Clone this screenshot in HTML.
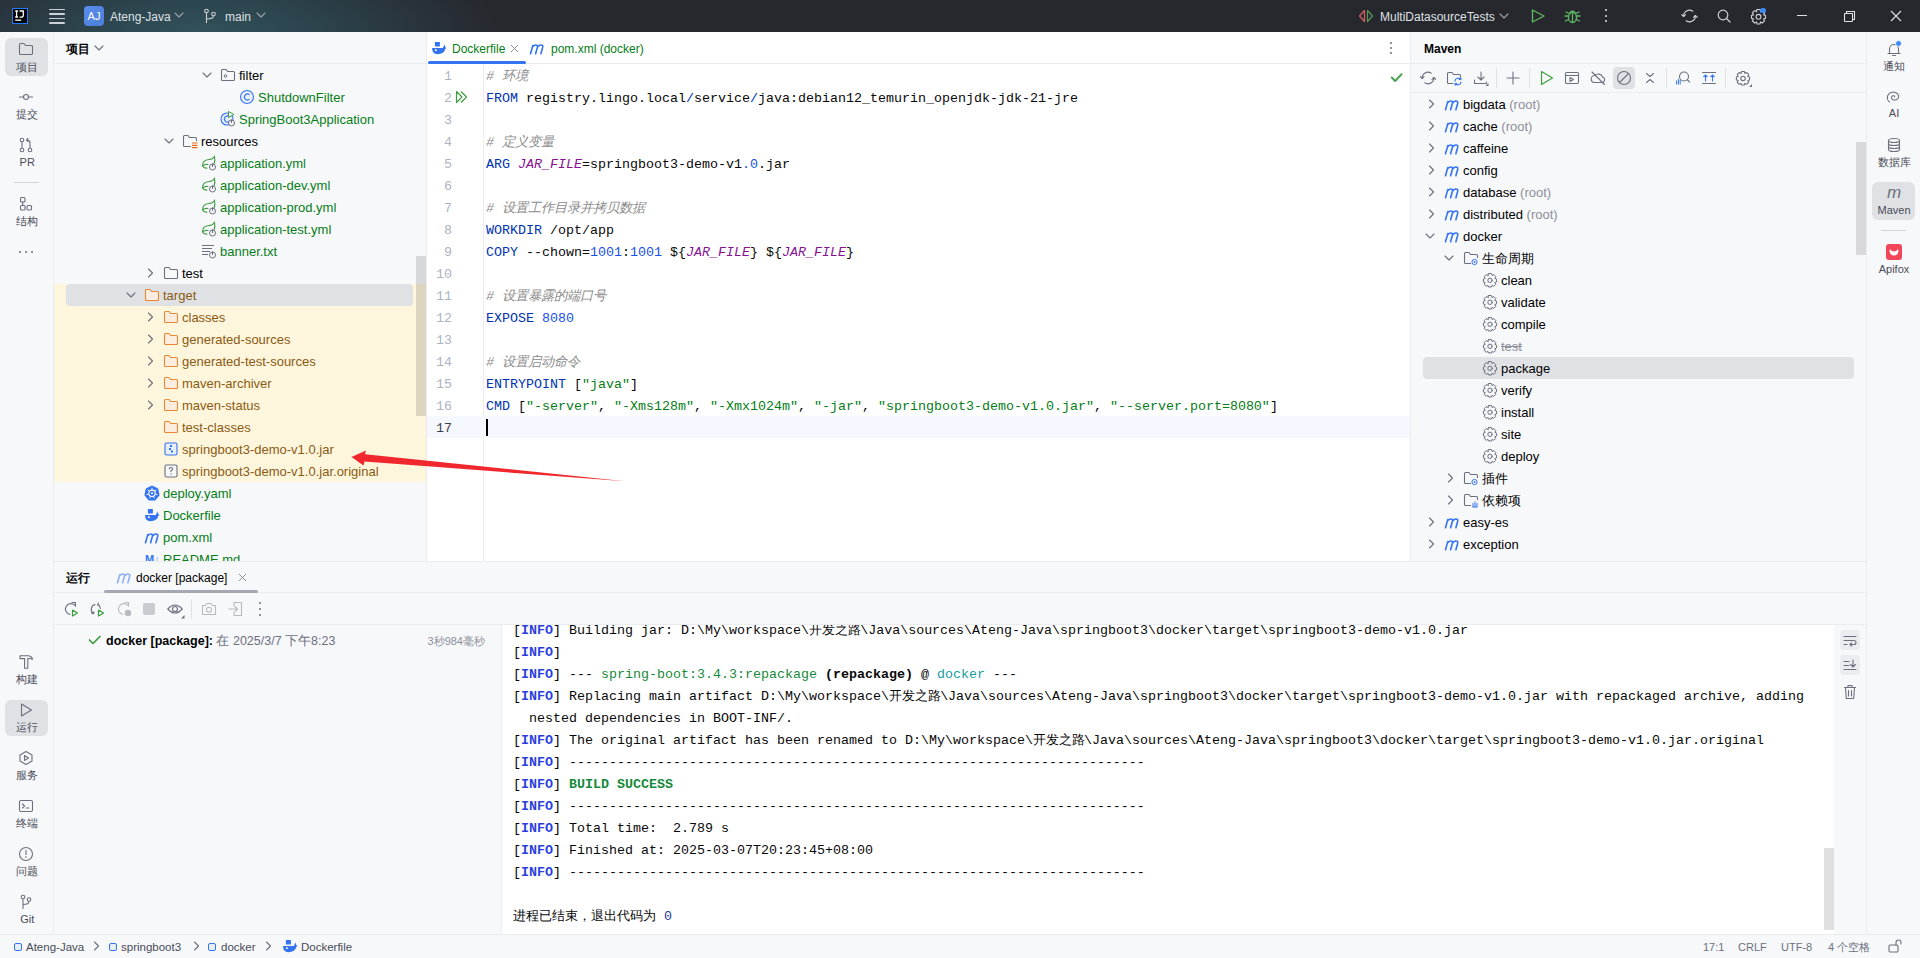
<!DOCTYPE html><html><head><meta charset="utf-8"><style>
*{margin:0;padding:0;box-sizing:border-box}
html,body{width:1920px;height:958px;overflow:hidden;background:#F7F8FA;font-family:"Liberation Sans", sans-serif;font-size:13px;color:#000}
.a{position:absolute}
.t{position:absolute;white-space:pre;line-height:16px}
.m{font-family:"Liberation Mono", monospace;font-size:13.33px}
svg{position:absolute;overflow:visible}
.s{fill:none;stroke:#6C707E;stroke-width:1.1;stroke-linecap:round;stroke-linejoin:round}
</style></head><body>
<div class="a" style="left:0px;top:0px;width:1920px;height:32px;background:radial-gradient(ellipse 300px 90px at 200px 32px,#31525c 0%,#2c434c 40%,#29343d 72%,#27282e 100%)"></div>
<div class="a" style="left:0px;top:32px;width:53px;height:903px;background:#F7F8FA"></div>
<div class="a" style="left:53px;top:32px;width:1px;height:903px;background:#EBECF0"></div>
<div class="a" style="left:54px;top:32px;width:372px;height:530px;background:#F7F8FA"></div>
<div class="a" style="left:54px;top:63px;width:372px;height:1px;background:#EBECF0"></div>
<div class="a" style="left:426px;top:32px;width:1px;height:530px;background:#EBECF0"></div>
<div class="a" style="left:427px;top:32px;width:983px;height:530px;background:#FFFFFF"></div>
<div class="a" style="left:427px;top:63px;width:983px;height:1px;background:#EBECF0"></div>
<div class="a" style="left:1410px;top:32px;width:1px;height:530px;background:#EBECF0"></div>
<div class="a" style="left:1411px;top:32px;width:455px;height:530px;background:#F7F8FA"></div>
<div class="a" style="left:1411px;top:63px;width:455px;height:1px;background:#EBECF0"></div>
<div class="a" style="left:1411px;top:92px;width:455px;height:1px;background:#EBECF0"></div>
<div class="a" style="left:1866px;top:32px;width:1px;height:903px;background:#EBECF0"></div>
<div class="a" style="left:1867px;top:32px;width:53px;height:903px;background:#F7F8FA"></div>
<div class="a" style="left:54px;top:561px;width:1812px;height:1px;background:#EBECF0"></div>
<div class="a" style="left:54px;top:562px;width:1812px;height:373px;background:#F7F8FA"></div>
<div class="a" style="left:54px;top:592px;width:1812px;height:1px;background:#EBECF0"></div>
<div class="a" style="left:54px;top:624px;width:1812px;height:1px;background:#EBECF0"></div>
<div class="a" style="left:501px;top:625px;width:1px;height:310px;background:#EBECF0"></div>
<div class="a" style="left:502px;top:625px;width:1332px;height:310px;background:#FFFFFF"></div>
<div class="a" style="left:0px;top:934px;width:1920px;height:1px;background:#EBECF0"></div>
<div class="a" style="left:0px;top:935px;width:1920px;height:23px;background:#F7F8FA"></div>
<div class="a" style="left:12px;top:8px;width:16px;height:16px;background:#000;border:1.2px solid #1A7DF5"></div>
<svg style="left:12px;top:8px;" width="16" height="16" viewBox="0 0 16 16"><path d="M3.2 3 H6 M4.6 3 V9 M3.2 9 H6" stroke="#fff" stroke-width="1.3" fill="none"/><path d="M7.5 3 H11.3 V7.3 Q11.3 9.2 9.3 9.2 H7.5" stroke="#fff" stroke-width="1.3" fill="none"/><rect x="3.2" y="11.5" width="6" height="1.3" fill="#fff"/></svg>
<div class="a" style="left:49px;top:8.5px;width:16px;height:1.5px;background:#CED0D6;border-radius:1px"></div>
<div class="a" style="left:49px;top:13px;width:16px;height:1.5px;background:#CED0D6;border-radius:1px"></div>
<div class="a" style="left:49px;top:17.6px;width:16px;height:1.5px;background:#CED0D6;border-radius:1px"></div>
<div class="a" style="left:49px;top:22.2px;width:16px;height:1.5px;background:#CED0D6;border-radius:1px"></div>
<div class="a" style="left:84px;top:6px;width:20px;height:20px;background:linear-gradient(135deg,#5B8DEF,#4A7FD6);border-radius:4px"></div>
<div class="t" style="left:84px;top:8px;width:20px;text-align:center;font-size:11px;color:#fff">AJ</div>
<div class="t" style="left:110px;top:9px;color:#DFE1E5;font-size:12px">Ateng-Java</div>
<svg style="left:174px;top:11px;" width="10" height="8" viewBox="0 0 10 8"><path d="M1 2 L5 6 L9 2" fill="none" stroke="#9DA0A8" stroke-width="1.1" stroke-linecap="round" stroke-linejoin="round"/></svg>
<svg style="left:203px;top:8px;" width="14" height="16" viewBox="0 0 14 16"><g fill="none" stroke="#CED0D6" stroke-width="1.1"><circle cx="3.5" cy="3" r="1.8"/><circle cx="10.5" cy="6" r="1.8"/><path d="M3.5 5 V15 M10.5 8 Q10.5 11 3.5 11"/></g></svg>
<div class="t" style="left:225px;top:9px;color:#DFE1E5;font-size:12px">main</div>
<svg style="left:256px;top:11px;" width="10" height="8" viewBox="0 0 10 8"><path d="M1 2 L5 6 L9 2" fill="none" stroke="#9DA0A8" stroke-width="1.1" stroke-linecap="round" stroke-linejoin="round"/></svg>
<svg style="left:1358px;top:9px;" width="16" height="14" viewBox="0 0 16 14"><path d="M6.5 1.5 L1.5 7 L6.5 12.5 Z" fill="none" stroke="#DB5C5C" stroke-width="1.2" stroke-linejoin="round"/><path d="M9.5 1.5 L14.5 7 L9.5 12.5 Z" fill="none" stroke="#57965C" stroke-width="1.2" stroke-linejoin="round"/></svg>
<div class="t" style="left:1380px;top:9px;color:#DFE1E5;font-size:12px">MultiDatasourceTests</div>
<svg style="left:1499px;top:12px;" width="10" height="8" viewBox="0 0 10 8"><path d="M1 2 L5 6 L9 2" fill="none" stroke="#9DA0A8" stroke-width="1.1" stroke-linecap="round" stroke-linejoin="round"/></svg>
<svg style="left:1531px;top:9px;" width="15" height="14" viewBox="0 0 15 14"><path d="M1.5 1 L13 7 L1.5 13 Z" fill="none" stroke="#5FB865" stroke-width="1.4" stroke-linejoin="round"/></svg>
<svg style="left:1564px;top:8px;" width="17" height="16" viewBox="0 0 17 16"><g fill="none" stroke="#5FB865" stroke-width="1.3" stroke-linecap="round"><ellipse cx="8.5" cy="9.5" rx="4" ry="5"/><path d="M6 4.5 Q8.5 2 11 4.5 M4.5 8 H1 M12.5 8 H16 M4.5 11.5 L1.5 13 M12.5 11.5 L15.5 13 M5 5.5 L2 4 M12 5.5 L15 4 M8.5 6 V14"/></g></svg>
<div class="a" style="left:1604.5px;top:8.8px;width:2.5px;height:2.5px;background:#DFE1E5;border-radius:50%"></div>
<div class="a" style="left:1604.5px;top:14.8px;width:2.5px;height:2.5px;background:#DFE1E5;border-radius:50%"></div>
<div class="a" style="left:1604.5px;top:19.8px;width:2.5px;height:2.5px;background:#DFE1E5;border-radius:50%"></div>
<svg style="left:1681px;top:8px;" width="17" height="16" viewBox="0 0 17 16"><g fill="none" stroke="#CED0D6" stroke-width="1.1" stroke-linecap="round" stroke-linejoin="round"><path d="M2.6 8.5 A5.9 5.9 0 0 1 11.8 3.2 M14.4 7.5 A5.9 5.9 0 0 1 5.2 12.8"/><path d="M0.7 6.6 L2.6 8.5 L4.5 6.6 M12.5 9.4 L14.4 7.5 L16.3 9.4"/></g></svg>
<svg style="left:1717px;top:9px;" width="15" height="15" viewBox="0 0 15 15"><g fill="none" stroke="#CED0D6" stroke-width="1.2" stroke-linecap="round"><circle cx="6" cy="6" r="4.8"/><path d="M9.5 9.5 L13 13"/></g></svg>
<svg style="left:1750px;top:8px;" width="17" height="16" viewBox="0 0 17 16"><g fill="none" stroke="#CED0D6" stroke-width="1.1"><path d="M7 1.5 H10 L10.6 3.6 L12.6 2.6 L14.6 4.8 L13.5 6.7 L15.5 7.4 V10.4 L13.5 11 L14.5 13 L12.4 15 L10.5 14 L9.9 16 H7.1 L6.5 14 L4.5 15 L2.4 13 L3.5 11 L1.5 10.4 V7.4 L3.5 6.8 L2.4 4.8 L4.4 2.6 L6.4 3.6 Z"/><circle cx="8.5" cy="8.8" r="2.4"/></g></svg>
<div class="a" style="left:1760.3px;top:8px;width:5.4px;height:5.4px;background:#3C8AF5;border-radius:50%"></div>
<div class="a" style="left:1797px;top:15px;width:10px;height:1.2px;background:#E0E0E0"></div>
<svg style="left:1843px;top:10px;" width="13" height="13" viewBox="0 0 13 13"><g fill="none" stroke="#E0E0E0" stroke-width="1.1"><rect x="1.5" y="3.5" width="8" height="8" rx="0.5"/><path d="M3.5 3.5 V1.5 H11.5 V9.5 H9.5"/></g></svg>
<svg style="left:1890px;top:10px;" width="12" height="12" viewBox="0 0 12 12"><path d="M1 1 L11 11 M11 1 L1 11" stroke="#E0E0E0" stroke-width="1.1"/></svg>
<div class="a" style="left:5px;top:38px;width:43px;height:38px;background:#DFE1E5;border-radius:6px"></div>
<svg style="left:18px;top:41px;" width="16" height="16" viewBox="0 0 16 16"><path d="M1.5 3.5 Q1.5 2.5 2.5 2.5 L6 2.5 L7.5 4.5 L13.5 4.5 Q14.5 4.5 14.5 5.5 L14.5 12.5 Q14.5 13.5 13.5 13.5 L2.5 13.5 Q1.5 13.5 1.5 12.5 Z" class="s"/></svg>
<div class="t" style="left:-2.8000000000000007px;top:59px;width:60px;text-align:center;color:#494B57;font-size:11px">项目</div>
<svg style="left:18px;top:89px;" width="16" height="16" viewBox="0 0 16 16"><g class="s"><circle cx="8" cy="8" r="2.5"/><path d="M1.5 8 H5.5 M10.5 8 H14.5"/></g></svg>
<div class="t" style="left:-2.8000000000000007px;top:106px;width:60px;text-align:center;color:#494B57;font-size:11px">提交</div>
<svg style="left:18px;top:137px;" width="16" height="16" viewBox="0 0 16 16"><g class="s"><circle cx="4" cy="3" r="1.8"/><circle cx="4" cy="13" r="1.8"/><circle cx="12" cy="13" r="1.8"/><path d="M4 5 V11 M12 11 V6 Q12 3 9 3 M10 1.5 L8.5 3 L10 4.5"/></g></svg>
<div class="t" style="left:-2.8000000000000007px;top:154px;width:60px;text-align:center;color:#494B57;font-size:11px">PR</div>
<div class="a" style="left:14px;top:182px;width:25px;height:1px;background:#D3D5DB"></div>
<svg style="left:18px;top:196px;" width="16" height="16" viewBox="0 0 16 16"><g class="s"><rect x="2.5" y="1.5" width="4.5" height="4.5" rx="1"/><rect x="2.5" y="9.5" width="4.5" height="4.5" rx="1"/><rect x="9" y="9.5" width="4.5" height="4.5" rx="1"/><path d="M4.7 6 V9.5"/></g></svg>
<div class="t" style="left:-2.8000000000000007px;top:213px;width:60px;text-align:center;color:#494B57;font-size:11px">结构</div>
<div class="a" style="left:19px;top:251px;width:2px;height:2px;background:#6C707E;border-radius:50%"></div>
<div class="a" style="left:25px;top:251px;width:2px;height:2px;background:#6C707E;border-radius:50%"></div>
<div class="a" style="left:31px;top:251px;width:2px;height:2px;background:#6C707E;border-radius:50%"></div>
<svg style="left:18px;top:654px;" width="16" height="16" viewBox="0 0 16 16"><g class="s"><path d="M2 1.8 H10.5 Q13.8 2.2 14.5 5.2 Q12.8 4.4 10.5 4.6 H9.8 V14.2 H6.6 V4.6 H2 Z"/></g></svg>
<div class="t" style="left:-2.8000000000000007px;top:671px;width:60px;text-align:center;color:#494B57;font-size:11px">构建</div>
<div class="a" style="left:5px;top:700px;width:43px;height:36px;background:#DFE1E5;border-radius:6px"></div>
<svg style="left:18px;top:702px;" width="16" height="16" viewBox="0 0 16 16"><path d="M3.5 2 L13.5 8 L3.5 14 Z" class="s"/></svg>
<div class="t" style="left:-2.8000000000000007px;top:719px;width:60px;text-align:center;color:#494B57;font-size:11px">运行</div>
<svg style="left:18px;top:750px;" width="16" height="16" viewBox="0 0 16 16"><g class="s"><path d="M8 1.5 L14 5 V11 L8 14.5 L2 11 V5 Z"/><path d="M6.5 5.5 L10.5 8 L6.5 10.5 Z"/></g></svg>
<div class="t" style="left:-2.8000000000000007px;top:767px;width:60px;text-align:center;color:#494B57;font-size:11px">服务</div>
<svg style="left:18px;top:798px;" width="16" height="16" viewBox="0 0 16 16"><g class="s"><rect x="1.5" y="2.5" width="13" height="11" rx="1.5"/><path d="M4.5 6 L6.5 8 L4.5 10 M8 10 H11"/></g></svg>
<div class="t" style="left:-2.8000000000000007px;top:815px;width:60px;text-align:center;color:#494B57;font-size:11px">终端</div>
<svg style="left:18px;top:846px;" width="16" height="16" viewBox="0 0 16 16"><g class="s"><circle cx="8" cy="8" r="6.5"/><path d="M8 4.5 V8.5"/></g><circle cx="8" cy="11" r="0.8" fill="#6C707E"/></svg>
<div class="t" style="left:-2.8000000000000007px;top:863px;width:60px;text-align:center;color:#494B57;font-size:11px">问题</div>
<svg style="left:18px;top:894px;" width="16" height="16" viewBox="0 0 16 16"><g class="s"><circle cx="5" cy="3" r="1.8"/><circle cx="11" cy="5.5" r="1.8"/><path d="M5 5 V14.5 M11 7.5 Q11 10.5 5 10.5"/></g></svg>
<div class="t" style="left:-2.8000000000000007px;top:911px;width:60px;text-align:center;color:#494B57;font-size:11px">Git</div>
<div class="a" style="left:1872px;top:182px;width:43px;height:38px;background:#DFE1E5;border-radius:6px"></div>
<svg style="left:1886px;top:42px;" width="16" height="16" viewBox="0 0 16 16"><g class="s"><path d="M3.5 11.5 V7 A4.5 4.5 0 0 1 12.5 7 V11.5 Z M2 11.5 H14 M6.5 13.5 H9.5"/></g></svg>
<div class="a" style="left:1895px;top:40px;width:7px;height:7px;background:#3C8AF5;border-radius:50%;border:1px solid #F7F8FA"></div>
<div class="t" style="left:1864.0px;top:58px;width:60px;text-align:center;color:#494B57;font-size:11px">通知</div>
<svg style="left:1886px;top:89px;" width="16" height="16" viewBox="0 0 16 16"><path d="M8.51 7.86 L8.53 7.83 L8.55 7.80 L8.57 7.76 L8.58 7.72 L8.59 7.68 L8.60 7.64 L8.61 7.60 L8.61 7.55 L8.61 7.51 L8.60 7.46 L8.59 7.41 L8.58 7.37 L8.56 7.32 L8.53 7.27 L8.51 7.22 L8.48 7.18 L8.44 7.13 L8.40 7.08 L8.36 7.04 L8.31 7.00 L8.26 6.96 L8.20 6.92 L8.14 6.88 L8.08 6.85 L8.01 6.82 L7.94 6.79 L7.87 6.76 L7.79 6.74 L7.71 6.73 L7.63 6.71 L7.54 6.70 L7.46 6.70 L7.37 6.69 L7.28 6.70 L7.19 6.71 L7.09 6.72 L7.00 6.73 L6.91 6.76 L6.82 6.78 L6.72 6.82 L6.63 6.85 L6.54 6.89 L6.45 6.94 L6.36 6.99 L6.28 7.05 L6.20 7.11 L6.12 7.18 L6.04 7.25 L5.97 7.33 L5.90 7.41 L5.83 7.49 L5.78 7.58 L5.72 7.67 L5.67 7.77 L5.63 7.87 L5.59 7.97 L5.56 8.08 L5.53 8.19 L5.51 8.30 L5.50 8.41 L5.49 8.53 L5.50 8.65 L5.51 8.76 L5.52 8.88 L5.55 9.00 L5.58 9.12 L5.62 9.24 L5.67 9.36 L5.72 9.48 L5.79 9.59 L5.86 9.71 L5.94 9.82 L6.02 9.93 L6.12 10.04 L6.22 10.14 L6.33 10.24 L6.44 10.33 L6.57 10.42 L6.70 10.51 L6.83 10.59 L6.98 10.67 L7.12 10.73 L7.28 10.80 L7.44 10.85 L7.60 10.90 L7.77 10.95 L7.94 10.98 L8.12 11.01 L8.29 11.03 L8.48 11.04 L8.66 11.05 L8.84 11.04 L9.03 11.03 L9.22 11.01 L9.40 10.98 L9.59 10.94 L9.78 10.89 L9.96 10.83 L10.14 10.77 L10.32 10.70 L10.50 10.61 L10.67 10.52 L10.84 10.42 L11.00 10.32 L11.16 10.20 L11.31 10.08 L11.46 9.95 L11.59 9.81 L11.73 9.66 L11.85 9.51 L11.96 9.35 L12.07 9.18 L12.17 9.01 L12.25 8.84 L12.33 8.66 L12.39 8.47 L12.45 8.28 L12.49 8.09 L12.53 7.89 L12.55 7.69 L12.56 7.49 L12.55 7.28 L12.54 7.08 L12.51 6.87 L12.47 6.67 L12.42 6.47 L12.36 6.26 L12.28 6.06 L12.19 5.86 L12.09 5.67 L11.97 5.47 L11.85 5.29 L11.71 5.10 L11.56 4.92 L11.39 4.75 L11.22 4.58 L11.04 4.43 L10.84 4.27 L10.64 4.13 L10.42 3.99 L10.20 3.87 L9.97 3.75 L9.73 3.64 L9.48 3.54 L9.23 3.46 L8.96 3.38 L8.70 3.31 L8.43 3.26 L8.15 3.22 L7.87 3.19 L7.58 3.17 L7.30 3.17 L7.01 3.18 L6.72 3.20 L6.43 3.23 L6.15 3.28 L5.86 3.34 L5.58 3.41 L5.30 3.50 L5.02 3.60 L4.75 3.71 L4.48 3.83 L4.22 3.97 L3.97 4.12 L3.72 4.28 L3.48 4.45 L3.26 4.63 L3.04 4.82 L2.83 5.03 L2.63 5.24 L2.45 5.47 L2.28 5.70 L2.12 5.94 L1.98 6.19 L1.85 6.45 L1.73 6.71 L1.63 6.98 L1.55 7.26 L1.48 7.54 L1.42 7.82 L1.39 8.11 L1.37 8.40 L1.37 8.69 L1.38 8.98 L1.42 9.28 L1.47 9.57 L1.54 9.86 L1.62 10.15 L1.73 10.44 L1.85 10.72 L1.98 11.00 L2.14 11.28 L2.31 11.55 L2.50 11.81 L2.70 12.06 L2.92 12.31 L3.16 12.55 L3.41 12.77 L3.68 12.99" fill="none" stroke="#6C707E" stroke-width="1.1" stroke-linecap="round"/></svg>
<div class="t" style="left:1864.0px;top:105px;width:60px;text-align:center;color:#494B57;font-size:11px">AI</div>
<svg style="left:1886px;top:137px;" width="16" height="16" viewBox="0 0 16 16"><g class="s"><ellipse cx="8" cy="3.5" rx="5.5" ry="2"/><path d="M2.5 3.5 V12.5 A5.5 2 0 0 0 13.5 12.5 V3.5 M2.5 6.5 A5.5 2 0 0 0 13.5 6.5 M2.5 9.5 A5.5 2 0 0 0 13.5 9.5"/></g></svg>
<div class="t" style="left:1864.0px;top:154px;width:60px;text-align:center;color:#494B57;font-size:11px">数据库</div>
<div class="t" style="left:1884px;top:183px;width:20px;text-align:center;font-size:17px;line-height:20px;font-style:italic;color:#6C707E">m</div>
<div class="t" style="left:1864.0px;top:202px;width:60px;text-align:center;color:#494B57;font-size:11px">Maven</div>
<div class="a" style="left:1881px;top:230px;width:25px;height:1px;background:#D3D5DB"></div>
<div class="a" style="left:1886px;top:244px;width:16px;height:16px;background:#F2465B;border-radius:3px"></div>
<svg style="left:1886px;top:244px;" width="16" height="16" viewBox="0 0 16 16"><path d="M4 5 A4.5 4.5 0 1 0 12 5 Q10.5 7.5 8 7.5 Q5.5 7.5 4 5 Z" fill="#fff"/></svg>
<div class="t" style="left:1864.0px;top:261px;width:60px;text-align:center;color:#494B57;font-size:11px">Apifox</div>
<div class="t" style="left:66px;top:41px;font-weight:bold;font-size:12px;color:#000">项目</div>
<svg style="left:94px;top:44px;" width="10" height="8" viewBox="0 0 10 8"><path d="M1 2 L5 6 L9 2" fill="none" stroke="#6C707E" stroke-width="1.1" stroke-linecap="round" stroke-linejoin="round"/></svg>
<div class="a" style="left:54px;top:284px;width:372px;height:198px;background:#FEF5DD"></div>
<div class="a" style="left:66px;top:284px;width:347px;height:22px;background:#DFE1E5;border-radius:4px"></div>
<div class="a" style="left:416px;top:256px;width:10px;height:160px;background:rgba(0,0,0,0.13)"></div>
<svg style="left:202px;top:71px;" width="10" height="8" viewBox="0 0 10 8"><path d="M1 2 L5 6 L9 2" fill="none" stroke="#6C707E" stroke-width="1.1" stroke-linecap="round" stroke-linejoin="round"/></svg>
<svg style="left:220px;top:67px;" width="16" height="16" viewBox="0 0 16 16"><path d="M1.5 3.5 Q1.5 2.5 2.5 2.5 L6 2.5 L7.5 4.5 L13.5 4.5 Q14.5 4.5 14.5 5.5 L14.5 12.5 Q14.5 13.5 13.5 13.5 L2.5 13.5 Q1.5 13.5 1.5 12.5 Z" fill="none" stroke="#6C707E" stroke-width="1.1" stroke-linejoin="round"/><circle cx="5.5" cy="9" r="1.3" fill="none" stroke="#6C707E" stroke-width="1"/></svg>
<div class="t" style="left:239px;top:68px;color:#000">filter</div>
<svg style="left:239px;top:89px;" width="16" height="16" viewBox="0 0 16 16"><circle cx="8" cy="8" r="6.5" fill="#E7EFFD" stroke="#3574F0" stroke-width="1.1"/><path d="M10.5 5.8 A3 3 0 1 0 10.5 10.2" fill="none" stroke="#3574F0" stroke-width="1.1"/></svg>
<div class="t" style="left:258px;top:90px;color:#067D17">ShutdownFilter</div>
<svg style="left:220px;top:111px;" width="16" height="16" viewBox="0 0 16 16"><circle cx="7" cy="8" r="6" fill="#E7EFFD" stroke="#3574F0" stroke-width="1.1"/><path d="M9.5 5.8 A3 3 0 1 0 9.5 10.2" fill="none" stroke="#3574F0" stroke-width="1.1"/><path d="M8.5 0.5 L14 3.5 L8.5 6.5 Z" fill="#F7F8FA" stroke="#3D9C3E" stroke-width="1"/><circle cx="11.5" cy="12" r="3" fill="#F7F8FA" stroke="#6C707E" stroke-width="1"/><path d="M11.5 8.5 V12" stroke="#6C707E" stroke-width="1"/></svg>
<div class="t" style="left:239px;top:112px;color:#067D17">SpringBoot3Application</div>
<svg style="left:164px;top:137px;" width="10" height="8" viewBox="0 0 10 8"><path d="M1 2 L5 6 L9 2" fill="none" stroke="#6C707E" stroke-width="1.1" stroke-linecap="round" stroke-linejoin="round"/></svg>
<svg style="left:182px;top:133px;" width="16" height="16" viewBox="0 0 16 16"><path d="M9 13.5 H2.5 Q1.5 13.5 1.5 12.5 V3.5 Q1.5 2.5 2.5 2.5 H6 L7.5 4.5 H13.5 Q14.5 4.5 14.5 5.5 V8" fill="none" stroke="#6C707E" stroke-width="1.1" stroke-linejoin="round"/><path d="M10 10 H15.5 M10 12.3 H15.5 M10 14.6 H15.5" stroke="#E66D17" stroke-width="1.2"/></svg>
<div class="t" style="left:201px;top:134px;color:#000">resources</div>
<svg style="left:201px;top:155px;" width="16" height="16" viewBox="0 0 16 16"><path d="M1.5 11 Q1.5 5 8 4.5 Q12 4.3 13.5 1.5 Q14.5 6 13 9 M1.5 11 Q4 9 7 9.5 M1.5 11 Q3 13.5 6 13" fill="none" stroke="#3D9C3E" stroke-width="1.1" stroke-linecap="round"/><circle cx="11.5" cy="12" r="3" fill="#F7F8FA" stroke="#6C707E" stroke-width="1"/><path d="M11.5 8.5 V12" stroke="#6C707E" stroke-width="1"/></svg>
<div class="t" style="left:220px;top:156px;color:#067D17">application.yml</div>
<svg style="left:201px;top:177px;" width="16" height="16" viewBox="0 0 16 16"><path d="M1.5 11 Q1.5 5 8 4.5 Q12 4.3 13.5 1.5 Q14.5 6 13 9 M1.5 11 Q4 9 7 9.5 M1.5 11 Q3 13.5 6 13" fill="none" stroke="#3D9C3E" stroke-width="1.1" stroke-linecap="round"/><circle cx="11.5" cy="12" r="3" fill="#F7F8FA" stroke="#6C707E" stroke-width="1"/><path d="M11.5 8.5 V12" stroke="#6C707E" stroke-width="1"/></svg>
<div class="t" style="left:220px;top:178px;color:#067D17">application-dev.yml</div>
<svg style="left:201px;top:199px;" width="16" height="16" viewBox="0 0 16 16"><path d="M1.5 11 Q1.5 5 8 4.5 Q12 4.3 13.5 1.5 Q14.5 6 13 9 M1.5 11 Q4 9 7 9.5 M1.5 11 Q3 13.5 6 13" fill="none" stroke="#3D9C3E" stroke-width="1.1" stroke-linecap="round"/><circle cx="11.5" cy="12" r="3" fill="#F7F8FA" stroke="#6C707E" stroke-width="1"/><path d="M11.5 8.5 V12" stroke="#6C707E" stroke-width="1"/></svg>
<div class="t" style="left:220px;top:200px;color:#067D17">application-prod.yml</div>
<svg style="left:201px;top:221px;" width="16" height="16" viewBox="0 0 16 16"><path d="M1.5 11 Q1.5 5 8 4.5 Q12 4.3 13.5 1.5 Q14.5 6 13 9 M1.5 11 Q4 9 7 9.5 M1.5 11 Q3 13.5 6 13" fill="none" stroke="#3D9C3E" stroke-width="1.1" stroke-linecap="round"/><circle cx="11.5" cy="12" r="3" fill="#F7F8FA" stroke="#6C707E" stroke-width="1"/><path d="M11.5 8.5 V12" stroke="#6C707E" stroke-width="1"/></svg>
<div class="t" style="left:220px;top:222px;color:#067D17">application-test.yml</div>
<svg style="left:201px;top:243px;" width="16" height="16" viewBox="0 0 16 16"><path d="M1 2.5 H13 M1 5.5 H11 M1 8.5 H9 M1 11.5 H7" stroke="#6C707E" stroke-width="1"/><circle cx="11.5" cy="12" r="3" fill="#F7F8FA" stroke="#6C707E" stroke-width="1"/><path d="M11.5 8.5 V12" stroke="#6C707E" stroke-width="1"/></svg>
<div class="t" style="left:220px;top:244px;color:#067D17">banner.txt</div>
<svg style="left:146px;top:268px;" width="8" height="10" viewBox="0 0 8 10"><path d="M2.5 1 L6.5 5 L2.5 9" fill="none" stroke="#6C707E" stroke-width="1.1" stroke-linecap="round" stroke-linejoin="round"/></svg>
<svg style="left:163px;top:265px;" width="16" height="16" viewBox="0 0 16 16"><path d="M1.5 3.5 Q1.5 2.5 2.5 2.5 L6 2.5 L7.5 4.5 L13.5 4.5 Q14.5 4.5 14.5 5.5 L14.5 12.5 Q14.5 13.5 13.5 13.5 L2.5 13.5 Q1.5 13.5 1.5 12.5 Z" fill="none" stroke="#6C707E" stroke-width="1.1" stroke-linejoin="round"/></svg>
<div class="t" style="left:182px;top:266px;color:#000">test</div>
<svg style="left:126px;top:291px;" width="10" height="8" viewBox="0 0 10 8"><path d="M1 2 L5 6 L9 2" fill="none" stroke="#6C707E" stroke-width="1.1" stroke-linecap="round" stroke-linejoin="round"/></svg>
<svg style="left:144px;top:287px;" width="16" height="16" viewBox="0 0 16 16"><path d="M1.5 3.5 Q1.5 2.5 2.5 2.5 L6 2.5 L7.5 4.5 L13.5 4.5 Q14.5 4.5 14.5 5.5 L14.5 12.5 Q14.5 13.5 13.5 13.5 L2.5 13.5 Q1.5 13.5 1.5 12.5 Z" fill="#FDECE0" stroke="#E88A35" stroke-width="1.1" stroke-linejoin="round"/></svg>
<div class="t" style="left:163px;top:288px;color:#8A5B12">target</div>
<svg style="left:146px;top:312px;" width="8" height="10" viewBox="0 0 8 10"><path d="M2.5 1 L6.5 5 L2.5 9" fill="none" stroke="#6C707E" stroke-width="1.1" stroke-linecap="round" stroke-linejoin="round"/></svg>
<svg style="left:163px;top:309px;" width="16" height="16" viewBox="0 0 16 16"><path d="M1.5 3.5 Q1.5 2.5 2.5 2.5 L6 2.5 L7.5 4.5 L13.5 4.5 Q14.5 4.5 14.5 5.5 L14.5 12.5 Q14.5 13.5 13.5 13.5 L2.5 13.5 Q1.5 13.5 1.5 12.5 Z" fill="#FDECE0" stroke="#E88A35" stroke-width="1.1" stroke-linejoin="round"/></svg>
<div class="t" style="left:182px;top:310px;color:#8A5B12">classes</div>
<svg style="left:146px;top:334px;" width="8" height="10" viewBox="0 0 8 10"><path d="M2.5 1 L6.5 5 L2.5 9" fill="none" stroke="#6C707E" stroke-width="1.1" stroke-linecap="round" stroke-linejoin="round"/></svg>
<svg style="left:163px;top:331px;" width="16" height="16" viewBox="0 0 16 16"><path d="M1.5 3.5 Q1.5 2.5 2.5 2.5 L6 2.5 L7.5 4.5 L13.5 4.5 Q14.5 4.5 14.5 5.5 L14.5 12.5 Q14.5 13.5 13.5 13.5 L2.5 13.5 Q1.5 13.5 1.5 12.5 Z" fill="#FDECE0" stroke="#E88A35" stroke-width="1.1" stroke-linejoin="round"/></svg>
<div class="t" style="left:182px;top:332px;color:#8A5B12">generated-sources</div>
<svg style="left:146px;top:356px;" width="8" height="10" viewBox="0 0 8 10"><path d="M2.5 1 L6.5 5 L2.5 9" fill="none" stroke="#6C707E" stroke-width="1.1" stroke-linecap="round" stroke-linejoin="round"/></svg>
<svg style="left:163px;top:353px;" width="16" height="16" viewBox="0 0 16 16"><path d="M1.5 3.5 Q1.5 2.5 2.5 2.5 L6 2.5 L7.5 4.5 L13.5 4.5 Q14.5 4.5 14.5 5.5 L14.5 12.5 Q14.5 13.5 13.5 13.5 L2.5 13.5 Q1.5 13.5 1.5 12.5 Z" fill="#FDECE0" stroke="#E88A35" stroke-width="1.1" stroke-linejoin="round"/></svg>
<div class="t" style="left:182px;top:354px;color:#8A5B12">generated-test-sources</div>
<svg style="left:146px;top:378px;" width="8" height="10" viewBox="0 0 8 10"><path d="M2.5 1 L6.5 5 L2.5 9" fill="none" stroke="#6C707E" stroke-width="1.1" stroke-linecap="round" stroke-linejoin="round"/></svg>
<svg style="left:163px;top:375px;" width="16" height="16" viewBox="0 0 16 16"><path d="M1.5 3.5 Q1.5 2.5 2.5 2.5 L6 2.5 L7.5 4.5 L13.5 4.5 Q14.5 4.5 14.5 5.5 L14.5 12.5 Q14.5 13.5 13.5 13.5 L2.5 13.5 Q1.5 13.5 1.5 12.5 Z" fill="#FDECE0" stroke="#E88A35" stroke-width="1.1" stroke-linejoin="round"/></svg>
<div class="t" style="left:182px;top:376px;color:#8A5B12">maven-archiver</div>
<svg style="left:146px;top:400px;" width="8" height="10" viewBox="0 0 8 10"><path d="M2.5 1 L6.5 5 L2.5 9" fill="none" stroke="#6C707E" stroke-width="1.1" stroke-linecap="round" stroke-linejoin="round"/></svg>
<svg style="left:163px;top:397px;" width="16" height="16" viewBox="0 0 16 16"><path d="M1.5 3.5 Q1.5 2.5 2.5 2.5 L6 2.5 L7.5 4.5 L13.5 4.5 Q14.5 4.5 14.5 5.5 L14.5 12.5 Q14.5 13.5 13.5 13.5 L2.5 13.5 Q1.5 13.5 1.5 12.5 Z" fill="#FDECE0" stroke="#E88A35" stroke-width="1.1" stroke-linejoin="round"/></svg>
<div class="t" style="left:182px;top:398px;color:#8A5B12">maven-status</div>
<svg style="left:163px;top:419px;" width="16" height="16" viewBox="0 0 16 16"><path d="M1.5 3.5 Q1.5 2.5 2.5 2.5 L6 2.5 L7.5 4.5 L13.5 4.5 Q14.5 4.5 14.5 5.5 L14.5 12.5 Q14.5 13.5 13.5 13.5 L2.5 13.5 Q1.5 13.5 1.5 12.5 Z" fill="#FDECE0" stroke="#E88A35" stroke-width="1.1" stroke-linejoin="round"/></svg>
<div class="t" style="left:182px;top:420px;color:#8A5B12">test-classes</div>
<svg style="left:163px;top:441px;" width="16" height="16" viewBox="0 0 16 16"><rect x="2" y="2" width="12" height="12" rx="1.5" fill="#E7EFFD" stroke="#3574F0" stroke-width="1.1"/><path d="M7 4 h2 v2 h-2 z M6 7 h2 v2 h-2 z M8 9.5 h2 v2 h-2 z" fill="#3574F0"/></svg>
<div class="t" style="left:182px;top:442px;color:#8A5B12">springboot3-demo-v1.0.jar</div>
<svg style="left:163px;top:463px;" width="16" height="16" viewBox="0 0 16 16"><rect x="2" y="2" width="12" height="12" rx="1.5" fill="#F7F8FA" stroke="#6C707E" stroke-width="1.1"/><path d="M6.3 6.2 Q6.3 4.5 8 4.5 Q9.7 4.5 9.7 6 Q9.7 7.2 8 7.8 V9" fill="none" stroke="#6C707E" stroke-width="1.1"/><circle cx="8" cy="11" r="0.7" fill="#6C707E"/></svg>
<div class="t" style="left:182px;top:464px;color:#8A5B12">springboot3-demo-v1.0.jar.original</div>
<svg style="left:144px;top:485px;" width="16" height="16" viewBox="0 0 16 16"><path d="M8 0.5 L14.2 3.5 L15.6 10.3 L11.3 15.6 H4.7 L0.4 10.3 L1.8 3.5 Z" fill="#3574F0"/><circle cx="8" cy="8.3" r="3.2" fill="none" stroke="#fff" stroke-width="1.1"/><circle cx="8" cy="8.3" r="1" fill="#fff"/><path d="M8.00 5.10 L8.00 2.70 M10.50 6.30 L12.38 4.81 M11.12 9.01 L13.46 9.55 M9.39 11.18 L10.43 13.35 M6.61 11.18 L5.57 13.35 M4.88 9.01 L2.54 9.55 M5.50 6.30 L3.62 4.81 " stroke="#fff" stroke-width="0.9"/></svg>
<div class="t" style="left:163px;top:486px;color:#067D17">deploy.yaml</div>
<svg style="left:144px;top:507px;" width="16" height="16" viewBox="0 0 16 16"><path d="M1 8 H12 Q12.4 6 13.4 4.5 Q14 6.5 14.6 7.6 L15.6 8 L14.4 8.8 Q13.3 14.2 6.3 14.2 Q1.4 14.2 1 8 Z" fill="#3574F0"/><rect x="3.9" y="2" width="5" height="4.4" rx="0.3" fill="#3574F0"/><rect x="4" y="9.3" width="1.7" height="1.7" fill="#fff"/></svg>
<div class="t" style="left:163px;top:508px;color:#067D17">Dockerfile</div>
<svg style="left:144px;top:529px;" width="16" height="16" viewBox="0 0 16 16"><path d="M1.5 13.8 L3.8 5.6 M3.4 7.2 Q4.7 5 6.6 5 Q8.9 5 8.4 7.2 L6.6 13.8 M8.6 7 Q10 5 11.9 5 Q14.2 5 13.7 7.2 L11.9 13.8" fill="none" stroke="#3574F0" stroke-width="1.6" stroke-linecap="round" stroke-linejoin="round"/></svg>
<div class="t" style="left:163px;top:530px;color:#067D17">pom.xml</div>
<div class="a" style="left:54px;top:548px;width:372px;height:13px;overflow:hidden">
<div class="t" style="left:91px;top:3px;font-size:11px;font-weight:bold;color:#3574F0">M↓</div>
<div class="t" style="left:109px;top:4px;color:#067D17">README.md</div>
</div>
<div class="a" style="left:428px;top:61px;width:98px;height:2.5px;background:#3574F0;border-radius:2px"></div>
<svg style="left:431px;top:40px;" width="16" height="16" viewBox="0 0 16 16"><path d="M1 8 H12 Q12.4 6 13.4 4.5 Q14 6.5 14.6 7.6 L15.6 8 L14.4 8.8 Q13.3 14.2 6.3 14.2 Q1.4 14.2 1 8 Z" fill="#3574F0"/><rect x="3.9" y="2" width="5" height="4.4" rx="0.3" fill="#3574F0"/><rect x="4" y="9.3" width="1.7" height="1.7" fill="#fff"/></svg>
<div class="t" style="left:452px;top:41px;color:#067D17;font-size:12px">Dockerfile</div>
<svg style="left:510px;top:44px;" width="9" height="9" viewBox="0 0 9 9"><path d="M1 1 L8 8 M8 1 L1 8" stroke="#8C8F99" stroke-width="1"/></svg>
<svg style="left:529px;top:40px;" width="16" height="16" viewBox="0 0 16 16"><path d="M1.5 13.8 L3.8 5.6 M3.4 7.2 Q4.7 5 6.6 5 Q8.9 5 8.4 7.2 L6.6 13.8 M8.6 7 Q10 5 11.9 5 Q14.2 5 13.7 7.2 L11.9 13.8" fill="none" stroke="#3574F0" stroke-width="1.6" stroke-linecap="round" stroke-linejoin="round"/></svg>
<div class="t" style="left:551px;top:41px;color:#067D17;font-size:12px">pom.xml (docker)</div>
<div class="a" style="left:1390px;top:42px;width:2.2px;height:2.2px;background:#6C707E;border-radius:50%"></div>
<div class="a" style="left:1390px;top:47px;width:2.2px;height:2.2px;background:#6C707E;border-radius:50%"></div>
<div class="a" style="left:1390px;top:52px;width:2.2px;height:2.2px;background:#6C707E;border-radius:50%"></div>
<svg style="left:1390px;top:72px;" width="13" height="11" viewBox="0 0 13 11"><path d="M1.8 5.5 L5.2 9 L11.5 2.2" fill="none" stroke="#4BA353" stroke-width="2" stroke-linecap="round" stroke-linejoin="round"/></svg>
<div class="a" style="left:483px;top:64px;width:1px;height:497px;background:#EBECF0"></div>
<div class="a" style="left:427px;top:416px;width:983px;height:22px;background:#F5F8FE"></div>
<div class="t m" style="left:427px;top:69px;width:25px;text-align:right;color:#AEB3C2">1</div>
<div class="t m" style="left:486px;top:69px;color:#080808"><span style="color:#8C8C8C;font-style:italic"># </span><span style="color:#8C8C8C;font-style:italic"><span style="display:inline-block;width:26px;white-space:nowrap">环境</span></span></div>
<div class="t m" style="left:427px;top:91px;width:25px;text-align:right;color:#AEB3C2">2</div>
<div class="t m" style="left:486px;top:91px;color:#080808"><span style="color:#0033B3;">FROM</span> registry.lingo.local<span style="color:#0033B3;">/</span>service<span style="color:#0033B3;">/</span>java:debian12_temurin_openjdk-jdk-21-jre</div>
<div class="t m" style="left:427px;top:113px;width:25px;text-align:right;color:#AEB3C2">3</div>
<div class="t m" style="left:427px;top:135px;width:25px;text-align:right;color:#AEB3C2">4</div>
<div class="t m" style="left:486px;top:135px;color:#080808"><span style="color:#8C8C8C;font-style:italic"># <span style="display:inline-block;width:52px;white-space:nowrap">定义变量</span></span></div>
<div class="t m" style="left:427px;top:157px;width:25px;text-align:right;color:#AEB3C2">5</div>
<div class="t m" style="left:486px;top:157px;color:#080808"><span style="color:#0033B3;">ARG</span> <span style="color:#871094;font-style:italic">JAR_FILE</span>=springboot3-demo-v1<span style="color:#1750EB;">.0</span>.jar</div>
<div class="t m" style="left:427px;top:179px;width:25px;text-align:right;color:#AEB3C2">6</div>
<div class="t m" style="left:427px;top:201px;width:25px;text-align:right;color:#AEB3C2">7</div>
<div class="t m" style="left:486px;top:201px;color:#080808"><span style="color:#8C8C8C;font-style:italic"># <span style="display:inline-block;width:143px;white-space:nowrap">设置工作目录并拷贝数据</span></span></div>
<div class="t m" style="left:427px;top:223px;width:25px;text-align:right;color:#AEB3C2">8</div>
<div class="t m" style="left:486px;top:223px;color:#080808"><span style="color:#0033B3;">WORKDIR</span> /opt/app</div>
<div class="t m" style="left:427px;top:245px;width:25px;text-align:right;color:#AEB3C2">9</div>
<div class="t m" style="left:486px;top:245px;color:#080808"><span style="color:#0033B3;">COPY</span> --chown=<span style="color:#1750EB;">1001</span>:<span style="color:#1750EB;">1001</span> ${<span style="color:#871094;font-style:italic">JAR_FILE</span>} ${<span style="color:#871094;font-style:italic">JAR_FILE</span>}</div>
<div class="t m" style="left:427px;top:267px;width:25px;text-align:right;color:#AEB3C2">10</div>
<div class="t m" style="left:427px;top:289px;width:25px;text-align:right;color:#AEB3C2">11</div>
<div class="t m" style="left:486px;top:289px;color:#080808"><span style="color:#8C8C8C;font-style:italic"># <span style="display:inline-block;width:104px;white-space:nowrap">设置暴露的端口号</span></span></div>
<div class="t m" style="left:427px;top:311px;width:25px;text-align:right;color:#AEB3C2">12</div>
<div class="t m" style="left:486px;top:311px;color:#080808"><span style="color:#0033B3;">EXPOSE</span> <span style="color:#1750EB;">8080</span></div>
<div class="t m" style="left:427px;top:333px;width:25px;text-align:right;color:#AEB3C2">13</div>
<div class="t m" style="left:427px;top:355px;width:25px;text-align:right;color:#AEB3C2">14</div>
<div class="t m" style="left:486px;top:355px;color:#080808"><span style="color:#8C8C8C;font-style:italic"># <span style="display:inline-block;width:78px;white-space:nowrap">设置启动命令</span></span></div>
<div class="t m" style="left:427px;top:377px;width:25px;text-align:right;color:#AEB3C2">15</div>
<div class="t m" style="left:486px;top:377px;color:#080808"><span style="color:#0033B3;">ENTRYPOINT</span> [<span style="color:#067D17;">"java"</span>]</div>
<div class="t m" style="left:427px;top:399px;width:25px;text-align:right;color:#AEB3C2">16</div>
<div class="t m" style="left:486px;top:399px;color:#080808"><span style="color:#0033B3;">CMD</span> [<span style="color:#067D17;">"-server"</span>, <span style="color:#067D17;">"-Xms128m"</span>, <span style="color:#067D17;">"-Xmx1024m"</span>, <span style="color:#067D17;">"-jar"</span>, <span style="color:#067D17;">"springboot3-demo-v1.0.jar"</span>, <span style="color:#067D17;">"--server.port=8080"</span>]</div>
<div class="t m" style="left:427px;top:421px;width:25px;text-align:right;color:#3E4048">17</div>
<svg style="left:455px;top:90px;" width="14" height="14" viewBox="0 0 14 14"><path d="M1.5 1.5 L7 7 L1.5 12.5 Z M6 1.5 L11.5 7 L6 12.5" fill="none" stroke="#3D9C3E" stroke-width="1.2" stroke-linejoin="round"/></svg>
<div class="a" style="left:486px;top:419px;width:2px;height:17px;background:#000"></div>
<div class="t" style="left:1424px;top:41px;font-weight:bold;font-size:12px;color:#000">Maven</div>
<svg style="left:1420px;top:70px;" width="16" height="16" viewBox="0 0 16 16"><g class="s"><path d="M2.2 8.5 A5.8 5.8 0 0 1 11.2 3.2 M13.8 7.5 A5.8 5.8 0 0 1 4.8 12.8"/><path d="M0.4 6.7 L2.2 8.5 L4 6.7 M12 9.3 L13.8 7.5 L15.6 9.3"/></g></svg>
<svg style="left:1446px;top:70px;" width="16" height="16" viewBox="0 0 16 16"><g class="s"><path d="M7 13.5 H2.5 Q1.5 13.5 1.5 12.5 V3.5 Q1.5 2.5 2.5 2.5 H6 L7.5 4.5 H13.5 Q14.5 4.5 14.5 5.5 V7"/></g><g fill="none" stroke="#3574F0" stroke-width="1.2" stroke-linecap="round"><path d="M9 11 A3 3 0 0 1 14.5 9.5 M15 12 A3 3 0 0 1 9.5 13.5"/><path d="M13.3 9.3 H14.8 V7.8 M10.7 13.7 H9.2 V15.2"/></g></svg>
<svg style="left:1473px;top:70px;" width="16" height="16" viewBox="0 0 16 16"><g class="s"><path d="M8 2 V10 M5 7 L8 10 L11 7 M1.5 10 V13.5 H13.5 V12"/></g><path d="M15.5 13 V16 H12.5 Z" fill="#6C707E"/></svg>
<div class="a" style="left:1496px;top:68px;width:1px;height:20px;background:#DFE1E5"></div>
<svg style="left:1505px;top:70px;" width="16" height="16" viewBox="0 0 16 16"><g class="s"><path d="M8 2 V14 M2 8 H14"/></g></svg>
<div class="a" style="left:1529px;top:68px;width:1px;height:20px;background:#DFE1E5"></div>
<svg style="left:1539px;top:70px;" width="16" height="16" viewBox="0 0 16 16"><path d="M2.5 1.5 L13.5 8 L2.5 14.5 Z" fill="none" stroke="#3D9C3E" stroke-width="1.2" stroke-linejoin="round"/></svg>
<svg style="left:1564px;top:70px;" width="16" height="16" viewBox="0 0 16 16"><g class="s"><rect x="1.5" y="2.5" width="13" height="11" rx="1.2"/><path d="M1.5 5.5 H14.5 M6 7.5 L9.5 9.5 L6 11.5 Z"/></g></svg>
<svg style="left:1590px;top:70px;" width="16" height="16" viewBox="0 0 16 16"><g class="s"><path d="M4.5 12.5 H12 A2.8 2.8 0 0 0 12.5 7 A4.5 4.5 0 0 0 5 5.5 A3.5 3.5 0 0 0 4.5 12.5 Z M2 2 L14.5 14.5"/></g></svg>
<div class="a" style="left:1613px;top:67px;width:22px;height:22px;background:#DFE1E5;border-radius:4px"></div>
<svg style="left:1616px;top:70px;" width="16" height="16" viewBox="0 0 16 16"><g class="s"><circle cx="8" cy="8" r="6.5"/><path d="M3.5 12.5 L12.5 3.5"/></g></svg>
<svg style="left:1642px;top:70px;" width="16" height="16" viewBox="0 0 16 16"><g class="s"><path d="M4.5 3.5 L8 6.5 L11.5 3.5 M4.5 12.5 L8 9.5 L11.5 12.5"/></g></svg>
<div class="a" style="left:1666px;top:68px;width:1px;height:20px;background:#DFE1E5"></div>
<svg style="left:1675px;top:70px;" width="16" height="16" viewBox="0 0 16 16"><g class="s"><circle cx="9" cy="6.5" r="4.5"/><path d="M12.2 9.7 L14.5 12"/></g><path d="M1.6 10.5 V14.5 M3.4 9 V14.5 M5.2 10 V14.5" stroke="#3574F0" stroke-width="1"/></svg>
<svg style="left:1701px;top:70px;" width="16" height="16" viewBox="0 0 16 16"><g class="s"><path d="M1.5 2.5 H14.5 M1.5 13.5 H14.5"/></g><path d="M4.5 11.5 V5 M2.5 7 L4.5 5 L6.5 7 M11.5 11.5 V5 M9.5 7 L11.5 5 L13.5 7" fill="none" stroke="#3574F0" stroke-width="1.1"/></svg>
<div class="a" style="left:1725px;top:68px;width:1px;height:20px;background:#DFE1E5"></div>
<svg style="left:1735px;top:70px;" width="16" height="16" viewBox="0 0 16 16"><g class="s"><path d="M6.6 1.5 H9.4 L10 3.5 L11.9 2.6 L13.8 4.6 L12.8 6.4 L14.6 7.1 V9.9 L12.8 10.5 L13.7 12.4 L11.7 14.3 L9.9 13.4 L9.4 15 H6.6 L6 13.4 L4.2 14.3 L2.2 12.4 L3.2 10.5 L1.4 9.9 V7.1 L3.2 6.5 L2.2 4.6 L4.1 2.6 L6 3.5 Z"/><circle cx="8" cy="8.4" r="2.2"/></g><path d="M17 14 V17 H14 Z" fill="#6C707E"/></svg>
<div class="a" style="left:1856px;top:142px;width:10px;height:113px;background:rgba(0,0,0,0.12)"></div>
<div class="a" style="left:1423px;top:357px;width:431px;height:22px;background:#DFE1E5;border-radius:4px"></div>
<svg style="left:1427px;top:99px;" width="8" height="10" viewBox="0 0 8 10"><path d="M2.5 1 L6.5 5 L2.5 9" fill="none" stroke="#6C707E" stroke-width="1.1" stroke-linecap="round" stroke-linejoin="round"/></svg>
<svg style="left:1444px;top:96px;" width="16" height="16" viewBox="0 0 16 16"><path d="M1.5 13.8 L3.8 5.6 M3.4 7.2 Q4.7 5 6.6 5 Q8.9 5 8.4 7.2 L6.6 13.8 M8.6 7 Q10 5 11.9 5 Q14.2 5 13.7 7.2 L11.9 13.8" fill="none" stroke="#3574F0" stroke-width="1.6" stroke-linecap="round" stroke-linejoin="round"/></svg>
<div class="t" style="left:1463px;top:97px;color:#000">bigdata<span style="color:#8C8F99"> (root)</span></div>
<svg style="left:1427px;top:121px;" width="8" height="10" viewBox="0 0 8 10"><path d="M2.5 1 L6.5 5 L2.5 9" fill="none" stroke="#6C707E" stroke-width="1.1" stroke-linecap="round" stroke-linejoin="round"/></svg>
<svg style="left:1444px;top:118px;" width="16" height="16" viewBox="0 0 16 16"><path d="M1.5 13.8 L3.8 5.6 M3.4 7.2 Q4.7 5 6.6 5 Q8.9 5 8.4 7.2 L6.6 13.8 M8.6 7 Q10 5 11.9 5 Q14.2 5 13.7 7.2 L11.9 13.8" fill="none" stroke="#3574F0" stroke-width="1.6" stroke-linecap="round" stroke-linejoin="round"/></svg>
<div class="t" style="left:1463px;top:119px;color:#000">cache<span style="color:#8C8F99"> (root)</span></div>
<svg style="left:1427px;top:143px;" width="8" height="10" viewBox="0 0 8 10"><path d="M2.5 1 L6.5 5 L2.5 9" fill="none" stroke="#6C707E" stroke-width="1.1" stroke-linecap="round" stroke-linejoin="round"/></svg>
<svg style="left:1444px;top:140px;" width="16" height="16" viewBox="0 0 16 16"><path d="M1.5 13.8 L3.8 5.6 M3.4 7.2 Q4.7 5 6.6 5 Q8.9 5 8.4 7.2 L6.6 13.8 M8.6 7 Q10 5 11.9 5 Q14.2 5 13.7 7.2 L11.9 13.8" fill="none" stroke="#3574F0" stroke-width="1.6" stroke-linecap="round" stroke-linejoin="round"/></svg>
<div class="t" style="left:1463px;top:141px;color:#000">caffeine</div>
<svg style="left:1427px;top:165px;" width="8" height="10" viewBox="0 0 8 10"><path d="M2.5 1 L6.5 5 L2.5 9" fill="none" stroke="#6C707E" stroke-width="1.1" stroke-linecap="round" stroke-linejoin="round"/></svg>
<svg style="left:1444px;top:162px;" width="16" height="16" viewBox="0 0 16 16"><path d="M1.5 13.8 L3.8 5.6 M3.4 7.2 Q4.7 5 6.6 5 Q8.9 5 8.4 7.2 L6.6 13.8 M8.6 7 Q10 5 11.9 5 Q14.2 5 13.7 7.2 L11.9 13.8" fill="none" stroke="#3574F0" stroke-width="1.6" stroke-linecap="round" stroke-linejoin="round"/></svg>
<div class="t" style="left:1463px;top:163px;color:#000">config</div>
<svg style="left:1427px;top:187px;" width="8" height="10" viewBox="0 0 8 10"><path d="M2.5 1 L6.5 5 L2.5 9" fill="none" stroke="#6C707E" stroke-width="1.1" stroke-linecap="round" stroke-linejoin="round"/></svg>
<svg style="left:1444px;top:184px;" width="16" height="16" viewBox="0 0 16 16"><path d="M1.5 13.8 L3.8 5.6 M3.4 7.2 Q4.7 5 6.6 5 Q8.9 5 8.4 7.2 L6.6 13.8 M8.6 7 Q10 5 11.9 5 Q14.2 5 13.7 7.2 L11.9 13.8" fill="none" stroke="#3574F0" stroke-width="1.6" stroke-linecap="round" stroke-linejoin="round"/></svg>
<div class="t" style="left:1463px;top:185px;color:#000">database<span style="color:#8C8F99"> (root)</span></div>
<svg style="left:1427px;top:209px;" width="8" height="10" viewBox="0 0 8 10"><path d="M2.5 1 L6.5 5 L2.5 9" fill="none" stroke="#6C707E" stroke-width="1.1" stroke-linecap="round" stroke-linejoin="round"/></svg>
<svg style="left:1444px;top:206px;" width="16" height="16" viewBox="0 0 16 16"><path d="M1.5 13.8 L3.8 5.6 M3.4 7.2 Q4.7 5 6.6 5 Q8.9 5 8.4 7.2 L6.6 13.8 M8.6 7 Q10 5 11.9 5 Q14.2 5 13.7 7.2 L11.9 13.8" fill="none" stroke="#3574F0" stroke-width="1.6" stroke-linecap="round" stroke-linejoin="round"/></svg>
<div class="t" style="left:1463px;top:207px;color:#000">distributed<span style="color:#8C8F99"> (root)</span></div>
<svg style="left:1425px;top:232px;" width="10" height="8" viewBox="0 0 10 8"><path d="M1 2 L5 6 L9 2" fill="none" stroke="#6C707E" stroke-width="1.1" stroke-linecap="round" stroke-linejoin="round"/></svg>
<svg style="left:1444px;top:228px;" width="16" height="16" viewBox="0 0 16 16"><path d="M1.5 13.8 L3.8 5.6 M3.4 7.2 Q4.7 5 6.6 5 Q8.9 5 8.4 7.2 L6.6 13.8 M8.6 7 Q10 5 11.9 5 Q14.2 5 13.7 7.2 L11.9 13.8" fill="none" stroke="#3574F0" stroke-width="1.6" stroke-linecap="round" stroke-linejoin="round"/></svg>
<div class="t" style="left:1463px;top:229px;color:#000">docker</div>
<svg style="left:1444px;top:254px;" width="10" height="8" viewBox="0 0 10 8"><path d="M1 2 L5 6 L9 2" fill="none" stroke="#6C707E" stroke-width="1.1" stroke-linecap="round" stroke-linejoin="round"/></svg>
<svg style="left:1463px;top:250px;" width="16" height="16" viewBox="0 0 16 16"><path d="M8 13.5 H2.5 Q1.5 13.5 1.5 12.5 V3.5 Q1.5 2.5 2.5 2.5 H6 L7.5 4.5 H13.5 Q14.5 4.5 14.5 5.5 V8" fill="none" stroke="#6C707E" stroke-width="1.1" stroke-linejoin="round"/><circle cx="11.5" cy="12" r="2.6" fill="#F7F8FA" stroke="#3574F0" stroke-width="1"/><circle cx="11.5" cy="12" r="0.9" fill="#3574F0"/></svg>
<div class="t" style="left:1482px;top:251px;color:#000">生命周期</div>
<svg style="left:1482px;top:272px;" width="16" height="16" viewBox="0 0 16 16"><g class="s" style="stroke-width:1"><path d="M6.6 1.5 H9.4 L10 3.5 L11.9 2.6 L13.8 4.6 L12.8 6.4 L14.6 7.1 V9.9 L12.8 10.5 L13.7 12.4 L11.7 14.3 L9.9 13.4 L9.4 15 H6.6 L6 13.4 L4.2 14.3 L2.2 12.4 L3.2 10.5 L1.4 9.9 V7.1 L3.2 6.5 L2.2 4.6 L4.1 2.6 L6 3.5 Z"/><circle cx="8" cy="8.3" r="2.2"/></g></svg>
<div class="t" style="left:1501px;top:273px;color:#000">clean</div>
<svg style="left:1482px;top:294px;" width="16" height="16" viewBox="0 0 16 16"><g class="s" style="stroke-width:1"><path d="M6.6 1.5 H9.4 L10 3.5 L11.9 2.6 L13.8 4.6 L12.8 6.4 L14.6 7.1 V9.9 L12.8 10.5 L13.7 12.4 L11.7 14.3 L9.9 13.4 L9.4 15 H6.6 L6 13.4 L4.2 14.3 L2.2 12.4 L3.2 10.5 L1.4 9.9 V7.1 L3.2 6.5 L2.2 4.6 L4.1 2.6 L6 3.5 Z"/><circle cx="8" cy="8.3" r="2.2"/></g></svg>
<div class="t" style="left:1501px;top:295px;color:#000">validate</div>
<svg style="left:1482px;top:316px;" width="16" height="16" viewBox="0 0 16 16"><g class="s" style="stroke-width:1"><path d="M6.6 1.5 H9.4 L10 3.5 L11.9 2.6 L13.8 4.6 L12.8 6.4 L14.6 7.1 V9.9 L12.8 10.5 L13.7 12.4 L11.7 14.3 L9.9 13.4 L9.4 15 H6.6 L6 13.4 L4.2 14.3 L2.2 12.4 L3.2 10.5 L1.4 9.9 V7.1 L3.2 6.5 L2.2 4.6 L4.1 2.6 L6 3.5 Z"/><circle cx="8" cy="8.3" r="2.2"/></g></svg>
<div class="t" style="left:1501px;top:317px;color:#000">compile</div>
<svg style="left:1482px;top:338px;" width="16" height="16" viewBox="0 0 16 16"><g class="s" style="stroke-width:1"><path d="M6.6 1.5 H9.4 L10 3.5 L11.9 2.6 L13.8 4.6 L12.8 6.4 L14.6 7.1 V9.9 L12.8 10.5 L13.7 12.4 L11.7 14.3 L9.9 13.4 L9.4 15 H6.6 L6 13.4 L4.2 14.3 L2.2 12.4 L3.2 10.5 L1.4 9.9 V7.1 L3.2 6.5 L2.2 4.6 L4.1 2.6 L6 3.5 Z"/><circle cx="8" cy="8.3" r="2.2"/></g></svg>
<div class="t" style="left:1501px;top:339px;color:#8C8F99;text-decoration:line-through">test</div>
<svg style="left:1482px;top:360px;" width="16" height="16" viewBox="0 0 16 16"><g class="s" style="stroke-width:1"><path d="M6.6 1.5 H9.4 L10 3.5 L11.9 2.6 L13.8 4.6 L12.8 6.4 L14.6 7.1 V9.9 L12.8 10.5 L13.7 12.4 L11.7 14.3 L9.9 13.4 L9.4 15 H6.6 L6 13.4 L4.2 14.3 L2.2 12.4 L3.2 10.5 L1.4 9.9 V7.1 L3.2 6.5 L2.2 4.6 L4.1 2.6 L6 3.5 Z"/><circle cx="8" cy="8.3" r="2.2"/></g></svg>
<div class="t" style="left:1501px;top:361px;color:#000">package</div>
<svg style="left:1482px;top:382px;" width="16" height="16" viewBox="0 0 16 16"><g class="s" style="stroke-width:1"><path d="M6.6 1.5 H9.4 L10 3.5 L11.9 2.6 L13.8 4.6 L12.8 6.4 L14.6 7.1 V9.9 L12.8 10.5 L13.7 12.4 L11.7 14.3 L9.9 13.4 L9.4 15 H6.6 L6 13.4 L4.2 14.3 L2.2 12.4 L3.2 10.5 L1.4 9.9 V7.1 L3.2 6.5 L2.2 4.6 L4.1 2.6 L6 3.5 Z"/><circle cx="8" cy="8.3" r="2.2"/></g></svg>
<div class="t" style="left:1501px;top:383px;color:#000">verify</div>
<svg style="left:1482px;top:404px;" width="16" height="16" viewBox="0 0 16 16"><g class="s" style="stroke-width:1"><path d="M6.6 1.5 H9.4 L10 3.5 L11.9 2.6 L13.8 4.6 L12.8 6.4 L14.6 7.1 V9.9 L12.8 10.5 L13.7 12.4 L11.7 14.3 L9.9 13.4 L9.4 15 H6.6 L6 13.4 L4.2 14.3 L2.2 12.4 L3.2 10.5 L1.4 9.9 V7.1 L3.2 6.5 L2.2 4.6 L4.1 2.6 L6 3.5 Z"/><circle cx="8" cy="8.3" r="2.2"/></g></svg>
<div class="t" style="left:1501px;top:405px;color:#000">install</div>
<svg style="left:1482px;top:426px;" width="16" height="16" viewBox="0 0 16 16"><g class="s" style="stroke-width:1"><path d="M6.6 1.5 H9.4 L10 3.5 L11.9 2.6 L13.8 4.6 L12.8 6.4 L14.6 7.1 V9.9 L12.8 10.5 L13.7 12.4 L11.7 14.3 L9.9 13.4 L9.4 15 H6.6 L6 13.4 L4.2 14.3 L2.2 12.4 L3.2 10.5 L1.4 9.9 V7.1 L3.2 6.5 L2.2 4.6 L4.1 2.6 L6 3.5 Z"/><circle cx="8" cy="8.3" r="2.2"/></g></svg>
<div class="t" style="left:1501px;top:427px;color:#000">site</div>
<svg style="left:1482px;top:448px;" width="16" height="16" viewBox="0 0 16 16"><g class="s" style="stroke-width:1"><path d="M6.6 1.5 H9.4 L10 3.5 L11.9 2.6 L13.8 4.6 L12.8 6.4 L14.6 7.1 V9.9 L12.8 10.5 L13.7 12.4 L11.7 14.3 L9.9 13.4 L9.4 15 H6.6 L6 13.4 L4.2 14.3 L2.2 12.4 L3.2 10.5 L1.4 9.9 V7.1 L3.2 6.5 L2.2 4.6 L4.1 2.6 L6 3.5 Z"/><circle cx="8" cy="8.3" r="2.2"/></g></svg>
<div class="t" style="left:1501px;top:449px;color:#000">deploy</div>
<svg style="left:1446px;top:473px;" width="8" height="10" viewBox="0 0 8 10"><path d="M2.5 1 L6.5 5 L2.5 9" fill="none" stroke="#6C707E" stroke-width="1.1" stroke-linecap="round" stroke-linejoin="round"/></svg>
<svg style="left:1463px;top:470px;" width="16" height="16" viewBox="0 0 16 16"><path d="M8 13.5 H2.5 Q1.5 13.5 1.5 12.5 V3.5 Q1.5 2.5 2.5 2.5 H6 L7.5 4.5 H13.5 Q14.5 4.5 14.5 5.5 V8" fill="none" stroke="#6C707E" stroke-width="1.1" stroke-linejoin="round"/><circle cx="11.5" cy="12" r="2.6" fill="#F7F8FA" stroke="#3574F0" stroke-width="1"/><circle cx="11.5" cy="12" r="0.9" fill="#3574F0"/></svg>
<div class="t" style="left:1482px;top:471px;color:#000">插件</div>
<svg style="left:1446px;top:495px;" width="8" height="10" viewBox="0 0 8 10"><path d="M2.5 1 L6.5 5 L2.5 9" fill="none" stroke="#6C707E" stroke-width="1.1" stroke-linecap="round" stroke-linejoin="round"/></svg>
<svg style="left:1463px;top:492px;" width="16" height="16" viewBox="0 0 16 16"><path d="M8 13.5 H2.5 Q1.5 13.5 1.5 12.5 V3.5 Q1.5 2.5 2.5 2.5 H6 L7.5 4.5 H13.5 Q14.5 4.5 14.5 5.5 V8" fill="none" stroke="#6C707E" stroke-width="1.1" stroke-linejoin="round"/><path d="M10 11 V15 M12 9.5 V15 M14 11 V15 M9.5 15 H14.5" stroke="#3574F0" stroke-width="1"/></svg>
<div class="t" style="left:1482px;top:493px;color:#000">依赖项</div>
<svg style="left:1427px;top:517px;" width="8" height="10" viewBox="0 0 8 10"><path d="M2.5 1 L6.5 5 L2.5 9" fill="none" stroke="#6C707E" stroke-width="1.1" stroke-linecap="round" stroke-linejoin="round"/></svg>
<svg style="left:1444px;top:514px;" width="16" height="16" viewBox="0 0 16 16"><path d="M1.5 13.8 L3.8 5.6 M3.4 7.2 Q4.7 5 6.6 5 Q8.9 5 8.4 7.2 L6.6 13.8 M8.6 7 Q10 5 11.9 5 Q14.2 5 13.7 7.2 L11.9 13.8" fill="none" stroke="#3574F0" stroke-width="1.6" stroke-linecap="round" stroke-linejoin="round"/></svg>
<div class="t" style="left:1463px;top:515px;color:#000">easy-es</div>
<svg style="left:1427px;top:539px;" width="8" height="10" viewBox="0 0 8 10"><path d="M2.5 1 L6.5 5 L2.5 9" fill="none" stroke="#6C707E" stroke-width="1.1" stroke-linecap="round" stroke-linejoin="round"/></svg>
<svg style="left:1444px;top:536px;" width="16" height="16" viewBox="0 0 16 16"><path d="M1.5 13.8 L3.8 5.6 M3.4 7.2 Q4.7 5 6.6 5 Q8.9 5 8.4 7.2 L6.6 13.8 M8.6 7 Q10 5 11.9 5 Q14.2 5 13.7 7.2 L11.9 13.8" fill="none" stroke="#3574F0" stroke-width="1.6" stroke-linecap="round" stroke-linejoin="round"/></svg>
<div class="t" style="left:1463px;top:537px;color:#000">exception</div>
<div class="t" style="left:66px;top:570px;font-weight:bold;font-size:12px;color:#000">运行</div>
<svg style="left:116px;top:569px;" width="16" height="16" viewBox="0 0 16 16"><path d="M1.5 13.8 L3.8 5.6 M3.4 7.2 Q4.7 5 6.6 5 Q8.9 5 8.4 7.2 L6.6 13.8 M8.6 7 Q10 5 11.9 5 Q14.2 5 13.7 7.2 L11.9 13.8" fill="none" stroke="#8DB0F5" stroke-width="1.6" stroke-linecap="round" stroke-linejoin="round"/></svg>
<div class="t" style="left:136px;top:570px;font-size:12px;color:#000">docker [package]</div>
<svg style="left:238px;top:573px;" width="9" height="9" viewBox="0 0 9 9"><path d="M1 1 L8 8 M8 1 L1 8" stroke="#8C8F99" stroke-width="1"/></svg>
<div class="a" style="left:104px;top:590px;width:154px;height:2.5px;background:#A5A8B2;border-radius:2px"></div>
<svg style="left:63px;top:601px;" width="16" height="16" viewBox="0 0 16 16"><g class="s"><path d="M12.5 5 A5.5 5.5 0 1 0 7 13.5"/><path d="M9 1.5 H12.5 V5"/></g><path d="M9.5 9 L14.5 12 L9.5 15 Z" fill="none" stroke="#3D9C3E" stroke-width="1.2" stroke-linejoin="round"/></svg>
<svg style="left:89px;top:601px;" width="16" height="16" viewBox="0 0 16 16"><g class="s"><path d="M6 3.5 A5 5 0 0 0 4.5 12.5 M2.5 12 L4.5 12.8 L5 10.8 M9.5 2 L8.5 4 L10.5 4.5 M8.8 3.8 A5 5 0 0 1 11.5 7.5"/></g><path d="M9.5 9 L14.5 12 L9.5 15 Z" fill="none" stroke="#3D9C3E" stroke-width="1.2" stroke-linejoin="round"/></svg>
<svg style="left:116px;top:601px;" width="16" height="16" viewBox="0 0 16 16"><g fill="none" stroke="#B8BAC0" stroke-width="1.1" stroke-linecap="round"><path d="M12.5 5 A5.5 5.5 0 1 0 7 13.5"/><path d="M9 1.5 H12.5 V5"/></g><circle cx="12" cy="12" r="3.2" fill="#B8BAC0"/></svg>
<div class="a" style="left:143px;top:603px;width:12px;height:12px;background:#C9CBD0;border-radius:2px"></div>
<svg style="left:167px;top:601px;" width="18" height="18" viewBox="0 0 18 18"><g class="s" style="stroke-width:1.2"><path d="M0.8 8 Q8 0 15.2 8 Q8 16 0.8 8 Z"/><circle cx="8" cy="8" r="2.5"/></g><path d="M17.5 14 V17.5 H14 Z" fill="#6C707E"/></svg>
<div class="a" style="left:191px;top:599px;width:1px;height:20px;background:#DFE1E5"></div>
<svg style="left:201px;top:601px;" width="16" height="16" viewBox="0 0 16 16"><g fill="none" stroke="#B8BAC0" stroke-width="1.1" stroke-linejoin="round"><path d="M1.5 4.5 H4.5 L6 2.5 H10 L11.5 4.5 H14.5 V13.5 H1.5 Z"/><circle cx="8" cy="8.8" r="2.5"/></g></svg>
<svg style="left:228px;top:601px;" width="16" height="16" viewBox="0 0 16 16"><g fill="none" stroke="#B8BAC0" stroke-width="1.1" stroke-linecap="round" stroke-linejoin="round"><path d="M6 1.5 H13.5 V14.5 H6 M6 5 V1.5 M6 11 V14.5 M1 8 H9.5 M7 5.5 L9.5 8 L7 10.5"/></g></svg>
<div class="a" style="left:259px;top:602px;width:2.2px;height:2.2px;background:#6C707E;border-radius:50%"></div>
<div class="a" style="left:259px;top:608px;width:2.2px;height:2.2px;background:#6C707E;border-radius:50%"></div>
<div class="a" style="left:259px;top:614px;width:2.2px;height:2.2px;background:#6C707E;border-radius:50%"></div>
<svg style="left:88px;top:634px;" width="14" height="12" viewBox="0 0 14 12"><path d="M1.5 6 L5 9.5 L12 2.5" fill="none" stroke="#3D9C3E" stroke-width="1.7" stroke-linecap="round" stroke-linejoin="round"/></svg>
<div class="t" style="left:106px;top:633px;font-size:12.5px;color:#000"><b>docker [package]:</b><span style="color:#6C707E"> 在 2025/3/7 下午8:23</span></div>
<div class="t" style="left:380px;top:633px;width:105px;text-align:right;font-size:11px;color:#8C8F99">3秒984毫秒</div>
<div class="a" style="left:502px;top:625px;width:1322px;height:309px;overflow:hidden">
<div class="t m" style="left:11px;top:-2.5px;color:#080808"><span style="color:#000">[</span><b style="color:#2B3FE0">INFO</b><span style="color:#000">]</span> Building jar: D:\My\workspace\<span style="display:inline-block;width:51.2px;white-space:nowrap">开发之路</span>\Java\sources\Ateng-Java\springboot3\docker\target\springboot3-demo-v1.0.jar</div>
<div class="t m" style="left:11px;top:19.5px;color:#080808"><span style="color:#000">[</span><b style="color:#2B3FE0">INFO</b><span style="color:#000">]</span></div>
<div class="t m" style="left:11px;top:41.5px;color:#080808"><span style="color:#000">[</span><b style="color:#2B3FE0">INFO</b><span style="color:#000">]</span> --- <span style="color:#168A3A">spring-boot:3.4.3:repackage</span> <b>(repackage)</b> @ <span style="color:#159DA0">docker</span> ---</div>
<div class="t m" style="left:11px;top:63.5px;color:#080808"><span style="color:#000">[</span><b style="color:#2B3FE0">INFO</b><span style="color:#000">]</span> Replacing main artifact D:\My\workspace\<span style="display:inline-block;width:51.2px;white-space:nowrap">开发之路</span>\Java\sources\Ateng-Java\springboot3\docker\target\springboot3-demo-v1.0.jar with repackaged archive, adding</div>
<div class="t m" style="left:11px;top:85.5px;color:#080808">  nested dependencies in BOOT-INF/.</div>
<div class="t m" style="left:11px;top:107.5px;color:#080808"><span style="color:#000">[</span><b style="color:#2B3FE0">INFO</b><span style="color:#000">]</span> The original artifact has been renamed to D:\My\workspace\<span style="display:inline-block;width:51.2px;white-space:nowrap">开发之路</span>\Java\sources\Ateng-Java\springboot3\docker\target\springboot3-demo-v1.0.jar.original</div>
<div class="t m" style="left:11px;top:129.5px;color:#080808"><span style="color:#000">[</span><b style="color:#2B3FE0">INFO</b><span style="color:#000">]</span> ------------------------------------------------------------------------</div>
<div class="t m" style="left:11px;top:151.5px;color:#080808"><span style="color:#000">[</span><b style="color:#2B3FE0">INFO</b><span style="color:#000">]</span> <b style="color:#168A3A">BUILD SUCCESS</b></div>
<div class="t m" style="left:11px;top:173.5px;color:#080808"><span style="color:#000">[</span><b style="color:#2B3FE0">INFO</b><span style="color:#000">]</span> ------------------------------------------------------------------------</div>
<div class="t m" style="left:11px;top:195.5px;color:#080808"><span style="color:#000">[</span><b style="color:#2B3FE0">INFO</b><span style="color:#000">]</span> Total time:  2.789 s</div>
<div class="t m" style="left:11px;top:217.5px;color:#080808"><span style="color:#000">[</span><b style="color:#2B3FE0">INFO</b><span style="color:#000">]</span> Finished at: 2025-03-07T20:23:45+08:00</div>
<div class="t m" style="left:11px;top:239.5px;color:#080808"><span style="color:#000">[</span><b style="color:#2B3FE0">INFO</b><span style="color:#000">]</span> ------------------------------------------------------------------------</div>
<div class="t m" style="left:11px;top:283.5px;color:#080808"><span style="display:inline-block;width:143px;white-space:nowrap">进程已结束，退出代码为</span> <span style="color:#2A3A9E">0</span></div>
</div>
<div class="a" style="left:1840px;top:630px;width:20px;height:20px;background:#EBECF0;border-radius:4px"></div>
<svg style="left:1842px;top:632px;" width="16" height="16" viewBox="0 0 16 16"><g class="s"><path d="M2 4.5 H14 M2 8.5 H12 A2 2 0 0 1 12 12.5 H8 M9.5 11 L8 12.5 L9.5 14 M2 12.5 H5"/></g></svg>
<div class="a" style="left:1840px;top:655px;width:20px;height:20px;background:#EBECF0;border-radius:4px"></div>
<svg style="left:1842px;top:657px;" width="16" height="16" viewBox="0 0 16 16"><g class="s"><path d="M2 4.5 H7 M2 8.5 H7 M2 12.5 H14 M11 3 V10 M8.5 7.5 L11 10 L13.5 7.5"/></g></svg>
<svg style="left:1842px;top:684px;" width="16" height="16" viewBox="0 0 16 16"><g class="s"><path d="M2.5 3.5 H13.5 M6 3.5 V1.5 H10 V3.5 M3.5 3.5 L4.3 14.5 H11.7 L12.5 3.5 M6.5 6.5 V12 M9.5 6.5 V12"/></g></svg>
<div class="a" style="left:1824px;top:848px;width:10px;height:82px;background:rgba(0,0,0,0.12)"></div>
<div class="a" style="left:14px;top:942.5px;width:8px;height:8px;border:1.2px solid #3574F0;border-radius:2px;background:#E7EFFD"></div>
<div class="t" style="left:26px;top:939px;font-size:11.5px;color:#494B57">Ateng-Java</div>
<svg style="left:92px;top:941px;" width="8" height="10" viewBox="0 0 8 10"><path d="M2.5 1 L6.5 5 L2.5 9" fill="none" stroke="#6C707E" stroke-width="1.1" stroke-linecap="round" stroke-linejoin="round"/></svg>
<div class="a" style="left:109px;top:942.5px;width:8px;height:8px;border:1.2px solid #3574F0;border-radius:2px;background:#E7EFFD"></div>
<div class="t" style="left:121px;top:939px;font-size:11.5px;color:#494B57">springboot3</div>
<svg style="left:192px;top:941px;" width="8" height="10" viewBox="0 0 8 10"><path d="M2.5 1 L6.5 5 L2.5 9" fill="none" stroke="#6C707E" stroke-width="1.1" stroke-linecap="round" stroke-linejoin="round"/></svg>
<div class="a" style="left:208px;top:942.5px;width:8px;height:8px;border:1.2px solid #3574F0;border-radius:2px;background:#E7EFFD"></div>
<div class="t" style="left:221px;top:939px;font-size:11.5px;color:#494B57">docker</div>
<svg style="left:264px;top:941px;" width="8" height="10" viewBox="0 0 8 10"><path d="M2.5 1 L6.5 5 L2.5 9" fill="none" stroke="#6C707E" stroke-width="1.1" stroke-linecap="round" stroke-linejoin="round"/></svg>
<svg style="left:282px;top:938px;" width="16" height="16" viewBox="0 0 16 16"><path d="M1 8 H12 Q12.4 6 13.4 4.5 Q14 6.5 14.6 7.6 L15.6 8 L14.4 8.8 Q13.3 14.2 6.3 14.2 Q1.4 14.2 1 8 Z" fill="#3574F0"/><rect x="3.9" y="2" width="5" height="4.4" rx="0.3" fill="#3574F0"/><rect x="4" y="9.3" width="1.7" height="1.7" fill="#fff"/></svg>
<div class="t" style="left:301px;top:939px;font-size:11.5px;color:#494B57">Dockerfile</div>
<div class="t" style="left:1703px;top:938.5px;font-size:11px;color:#6C707E">17:1</div>
<div class="t" style="left:1738px;top:938.5px;font-size:11px;color:#6C707E">CRLF</div>
<div class="t" style="left:1781px;top:938.5px;font-size:11px;color:#6C707E">UTF-8</div>
<div class="t" style="left:1828px;top:938.5px;font-size:11px;color:#6C707E">4 个空格</div>
<svg style="left:1888px;top:939px;" width="14" height="14" viewBox="0 0 14 14"><g class="s"><rect x="1" y="6" width="9" height="7" rx="1"/><path d="M8 6 V3.5 A2.5 2.5 0 0 1 13 3.5 V5"/></g></svg>
<svg style="left:0px;top:0px;left:0;top:0;pointer-events:none" width="1920" height="958" viewBox="0 0 1920 958"><path d="M351.5 457 L366 450.5 L365 454.2 L625 481.3 L364.5 461.5 L363.5 465.5 Z" fill="#F0282D"/></svg>
</body></html>
